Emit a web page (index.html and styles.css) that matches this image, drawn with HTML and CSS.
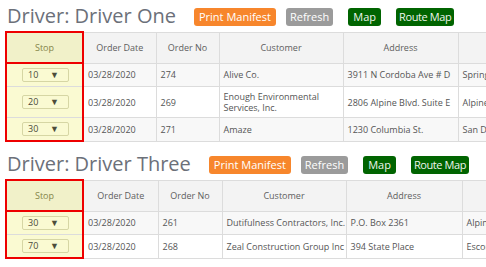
FILE: index.html
```html
<!DOCTYPE html>
<html lang="en">
<head>
  <meta charset="UTF-8" />
  <meta name="viewport" content="width=device-width, initial-scale=1.0"/>
  <title>Driver Manifests</title>
  <link rel="stylesheet" href="styles.css">
</head>
<body>

  <!-- Driver One -->
  <div class="driver">
    <div class="driver-head">
      <h2>Driver: Driver One</h2>
      <div class="actions">
        <button class="btn btn-orange">Print Manifest</button>
        <button class="btn btn-gray">Refresh</button>
        <button class="btn btn-green btn-map">Map</button>
        <button class="btn btn-green btn-map btn-route">Route Map</button>
      </div>
    </div>

    <table class="orders orders-one">
      <colgroup>
        <col class="c-stop"><col class="c-date"><col class="c-no"><col class="c-cust"><col class="c-addr"><col class="c-city">
      </colgroup>
      <thead>
        <tr>
          <th class="stop">Stop</th>
          <th>Order Date</th>
          <th>Order No</th>
          <th>Customer</th>
          <th>Address</th>
          <th>City</th>
        </tr>
      </thead>
      <tbody>
        <tr>
          <td class="stop"><div class="stop-select"><span>10</span><span class="arrow">&#9660;</span></div></td>
          <td>03/28/2020</td>
          <td>274</td>
          <td>Alive Co.</td>
          <td>3911 N Cordoba Ave # D</td>
          <td>Spring Valley</td>
        </tr>
        <tr>
          <td class="stop"><div class="stop-select"><span>20</span><span class="arrow">&#9660;</span></div></td>
          <td>03/28/2020</td>
          <td>269</td>
          <td>Enough Environmental Services, Inc.</td>
          <td>2806 Alpine Blvd. Suite E</td>
          <td>Alpine</td>
        </tr>
        <tr>
          <td class="stop"><div class="stop-select"><span>30</span><span class="arrow">&#9660;</span></div></td>
          <td>03/28/2020</td>
          <td>271</td>
          <td>Amaze</td>
          <td>1230 Columbia St.</td>
          <td>San Diego</td>
        </tr>
      </tbody>
    </table>
  </div>

  <!-- Driver Three -->
  <div class="driver">
    <div class="driver-head">
      <h2>Driver: Driver Three</h2>
      <div class="actions">
        <button class="btn btn-orange">Print Manifest</button>
        <button class="btn btn-gray">Refresh</button>
        <button class="btn btn-green btn-map">Map</button>
        <button class="btn btn-green btn-map btn-route">Route Map</button>
      </div>
    </div>

    <table class="orders orders-three">
      <colgroup>
        <col class="c-stop"><col class="c-date"><col class="c-no"><col class="c-cust"><col class="c-addr"><col class="c-city">
      </colgroup>
      <thead>
        <tr>
          <th class="stop">Stop</th>
          <th>Order Date</th>
          <th>Order No</th>
          <th>Customer</th>
          <th>Address</th>
          <th>City</th>
        </tr>
      </thead>
      <tbody>
        <tr>
          <td class="stop"><div class="stop-select"><span>30</span><span class="arrow">&#9660;</span></div></td>
          <td>03/28/2020</td>
          <td>261</td>
          <td>Dutifulness Contractors, Inc.</td>
          <td>P.O. Box 2361</td>
          <td>Alpine</td>
        </tr>
        <tr>
          <td class="stop"><div class="stop-select"><span>70</span><span class="arrow">&#9660;</span></div></td>
          <td>03/28/2020</td>
          <td>268</td>
          <td>Zeal Construction Group Inc</td>
          <td>394 State Place</td>
          <td>Escondido</td>
        </tr>
      </tbody>
    </table>
  </div>

</body>
</html>
```

FILE: styles.css
```css
* {
  box-sizing: border-box;
}

body {
  margin: 0;
  padding: 2px 0 0 5px;
  font-family: 'Open Sans', sans-serif;
  color: #555;
  background: #fff;
  overflow: hidden;
}

.driver {
  margin-bottom: 8px;
}

.driver-head {
  display: flex;
  align-items: flex-start;
  height: 29px;
}

h2 {
  margin: 0 0 0 2px;
  font-size: 20px;
  font-weight: normal;
  line-height: 27px;
  color: #6c7079;
  white-space: nowrap;
}

.actions {
  display: flex;
  gap: 10px;
  margin: 6px 0 0 18px;
}

.btn {
  height: 18px;
  padding: 0 5px;
  border: none;
  border-radius: 3px;
  font-family: 'Open Sans', sans-serif;
  font-size: 11px;
  line-height: 18px;
  color: #fff;
  white-space: nowrap;
  cursor: pointer;
}

.btn-orange {
  background: #f7862c;
}

.btn-gray {
  background: #9b9b9b;
  padding: 0 4px;
}

.btn-green {
  background: #006400;
  color: #eef5ee;
}

.btn-map {
  margin-left: 5px;
}

.btn-route {
  padding: 0 3px;
  letter-spacing: -0.4px;
}

/* Orders table */
.orders {
  border-collapse: collapse;
  table-layout: fixed;
  width: 600px;
  font-size: 9px;
}

.orders th,
.orders td {
  border: 1px solid #dcdcdc;
  padding: 4px 4px;
  line-height: 11px;
  vertical-align: middle;
}

.orders th {
  background: #f3f3f3;
  font-weight: normal;
  color: #5e5e5e;
  padding: 9px 4px;
  text-align: center;
}

.orders td {
  text-align: left;
}

.orders tbody tr:nth-child(odd) td {
  background: #f8f8f8;
}

.orders tbody tr:nth-child(even) td {
  background: #fff;
}

.orders th.stop {
  background: #f1f1c9;
  color: #85854a;
  border: 2px solid #ee0000;
}

.orders tbody tr td.stop {
  background: #fafad2;
  border-left: 2px solid #ee0000;
  border-right: 2px solid #ee0000;
  border-top-color: #e6e6bf;
  text-align: center;
}

.orders tbody tr:last-child td.stop {
  border-bottom: 2px solid #ee0000;
}

.orders-one .c-stop { width: 77px; }
.orders-one .c-date { width: 73px; }
.orders-one .c-no { width: 63px; }
.orders-one .c-cust { width: 124px; }
.orders-one .c-addr { width: 115px; }

.orders-three .c-stop { width: 77px; }
.orders-three .c-date { width: 75px; }
.orders-three .c-no { width: 64px; }
.orders-three .c-cust { width: 124px; }
.orders-three .c-addr { width: 116px; }

.orders-three td {
  white-space: nowrap;
}

.stop-select {
  display: inline-flex;
  align-items: center;
  justify-content: space-between;
  width: 47px;
  height: 14px;
  padding: 0 9px 0 5px;
  margin-left: 2px;
  border: 1px solid #d6d6a4;
  border-radius: 2px;
  background: #fafad2;
  color: #4a4a3a;
  font-size: 9px;
  line-height: 12px;
}

.arrow {
  font-size: 9px;
  color: #4d4d3a;
}
```
